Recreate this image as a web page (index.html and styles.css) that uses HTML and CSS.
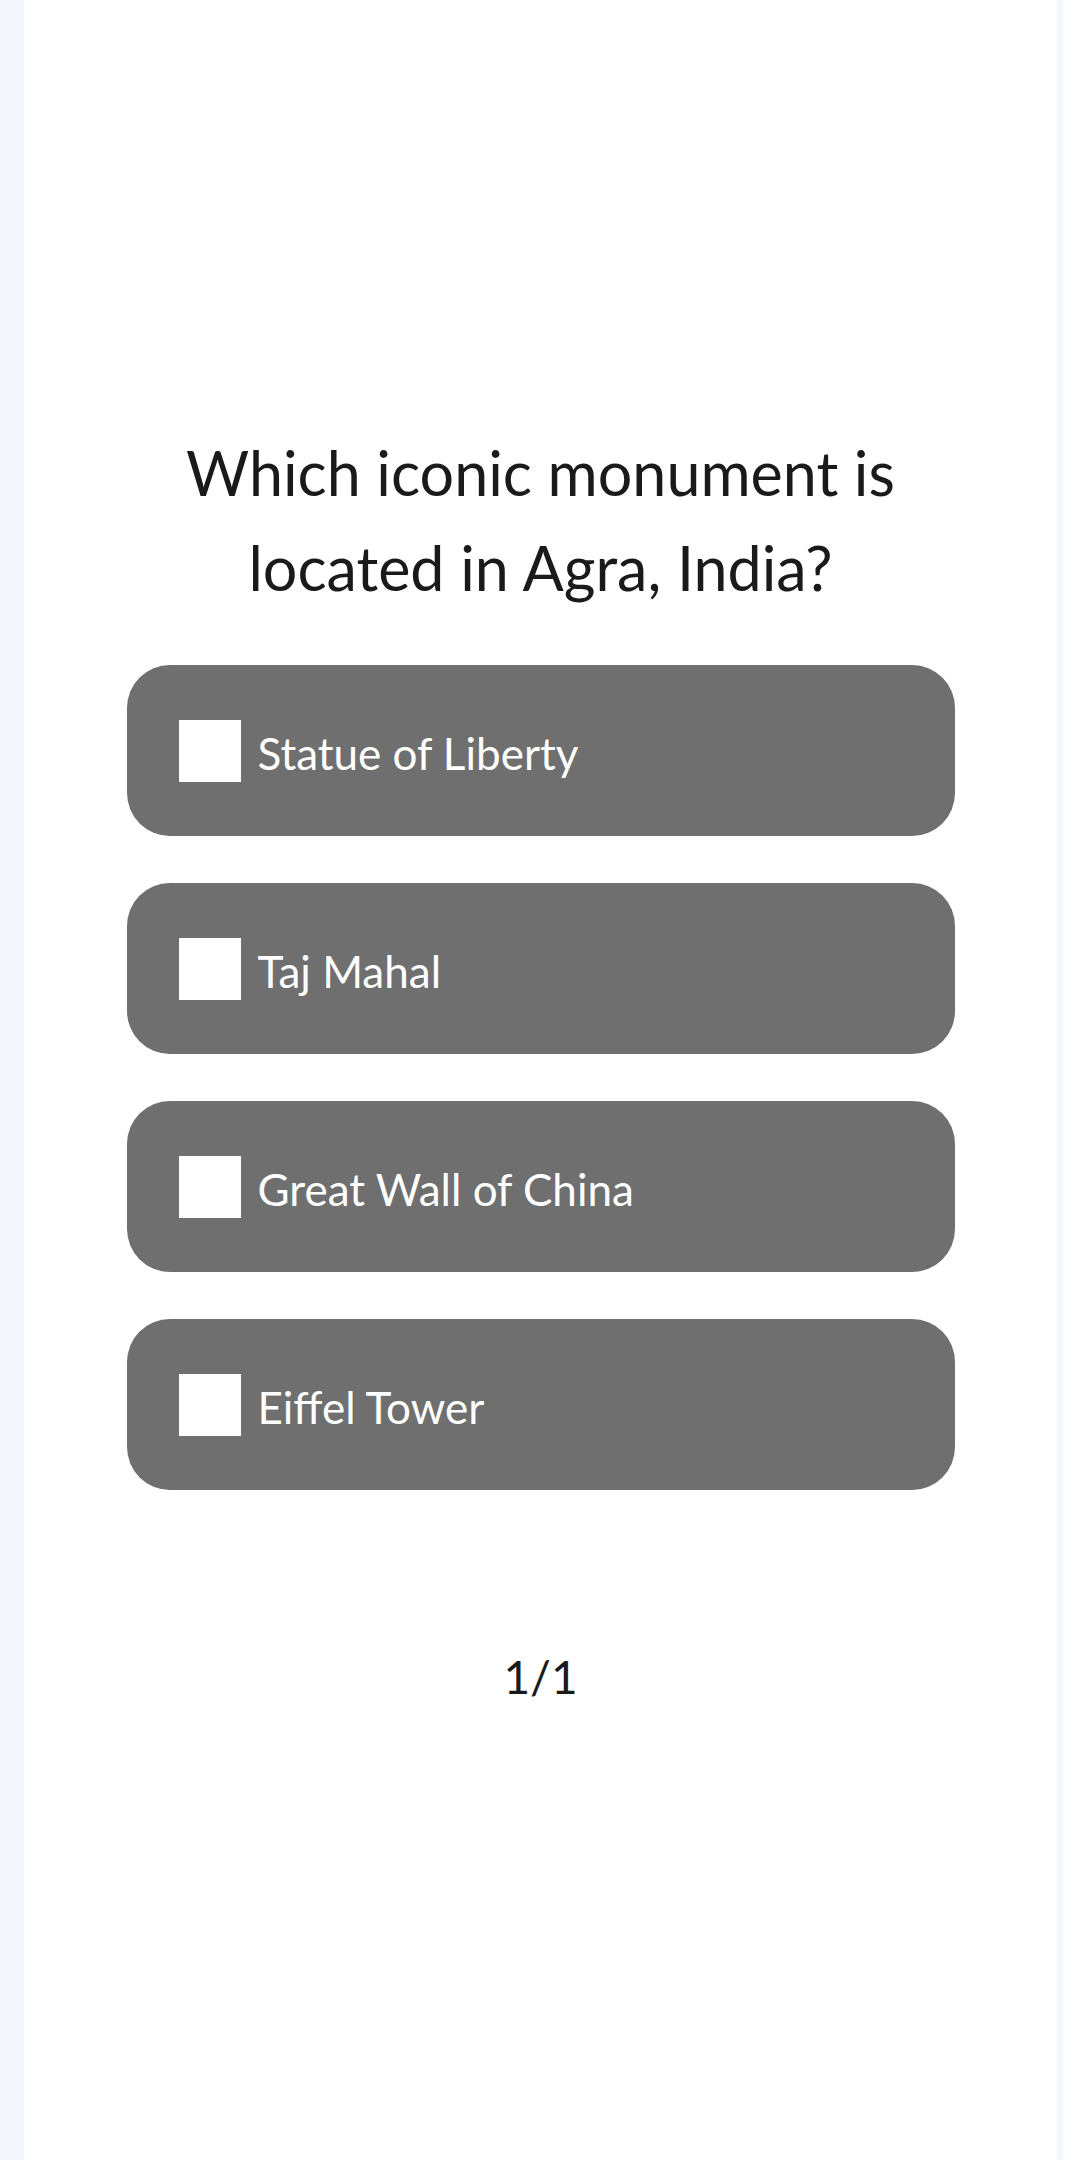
FILE: index.html
```html
<!DOCTYPE html>
<html lang="en">
<head>
    <meta charset="UTF-8">
    <meta name="viewport" content="width=device-width, initial-scale=1.0">
    <title>Quiz</title>
    <link rel="stylesheet" href="styles.css">
</head>
<body>
    <div class="screen">
        <h2 class="question">Which iconic monument is located in Agra, India?</h2>

        <div class="options">
            <label class="option"><span class="box"></span><span class="option-text">Statue of Liberty</span></label>
            <label class="option"><span class="box"></span><span class="option-text">Taj Mahal</span></label>
            <label class="option"><span class="box"></span><span class="option-text">Great Wall of China</span></label>
            <label class="option"><span class="box"></span><span class="option-text">Eiffel Tower</span></label>
        </div>

        <p class="counter">1/1</p>
    </div>
</body>
</html>
```

FILE: styles.css
```css
body {
    margin: 0;
    font-family: Lato, "Open Sans", sans-serif;
    background-color: #fff;
}
.screen {
    min-height: 2160px;
    box-sizing: border-box;
    margin-right: 17px;
    padding-top: 425px;
    border-left: 24px solid #f4f8fc;
    border-right: 6px solid #f4f8fc;
    background-color: #fff;
}
.question {
    width: 828px;
    margin: 0 auto 50px;
    font-size: 61px;
    font-weight: normal;
    line-height: 95px;
    text-align: center;
    color: #1a1a1a;
}
.options {
    width: 828px;
    margin: 0 auto;
    display: flex;
    flex-direction: column;
    gap: 47px;
}
.option {
    height: 171px;
    box-sizing: border-box;
    padding-left: 52px;
    border-radius: 43px;
    background-color: #6f6f6f;
    display: flex;
    align-items: center;
    gap: 17px;
}
.box {
    width: 62px;
    height: 62px;
    flex-shrink: 0;
    background-color: #fff;
}
.option-text {
    padding-top: 4px;
    font-size: 44px;
    color: #fff;
}
.counter {
    margin: 159px 0 0;
    font-size: 46px;
    text-align: center;
    color: #1a1a1a;
}
```
